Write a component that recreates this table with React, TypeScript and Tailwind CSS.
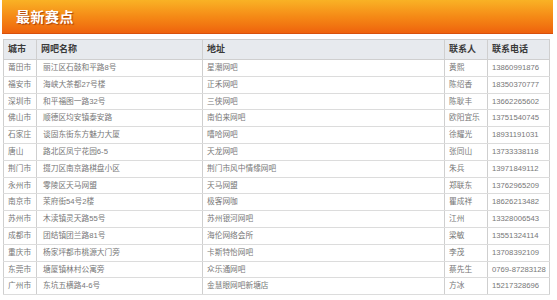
import React from "react";

const rows: [string, string, string, string, string][] = [
  ["莆田市", "丽江区石鼓和平路8号", "星潮网吧", "黄熙", "13860991876"],
  ["福安市", "海峡大茶都27号楼", "正禾网吧", "陈绍香", "18350370777"],
  ["深圳市", "和平福图一路32号", "三侠网吧", "陈耿丰", "13662265602"],
  ["佛山市", "顺德区均安镇泰安路", "南伯来网吧", "欧阳宜乐", "13751540745"],
  ["石家庄", "谈固东街东方魅力大厦", "嘻哈网吧", "徐耀光", "18931191031"],
  ["唐山", "路北区凤宁花园6-5", "天龙网吧", "张同山", "13733338118"],
  ["荆门市", "掇刀区南京路棋盘小区", "荆门市风中情缘网吧", "朱兵", "13971849112"],
  ["永州市", "零陵区天马网盟", "天马网盟", "郑联东", "13762965209"],
  ["南京市", "茉府街54号2楼", "极客网咖", "瞿成祥", "18626213482"],
  ["苏州市", "木渎镇灵天路55号", "苏州银河网吧", "江州", "13328006543"],
  ["成都市", "团结镇团兰路81号", "海伦网络会所", "梁敏", "13551324114"],
  ["重庆市", "杨家坪都市桃源大门旁", "卡斯特怡网吧", "李茂", "13708392109"],
  ["东莞市", "塘厦镇林村公寓旁", "众乐通网吧", "蔡先生", "0769-87283128"],
  ["广州市", "东坑五横路4-6号", "金慧眼网吧新塘店", "方冰", "15217328696"],
];

const headers = ["城市", "网吧名称", "地址", "联系人", "联系电话"];

export default function App() {
  return (
    <div
      className="w-[557px] h-[300px] bg-white overflow-hidden"
      style={{ fontFamily: '"Liberation Sans", "Noto Sans CJK SC", sans-serif' }}
    >
      <div className="ml-[2px] w-[551px] h-[34px] bg-gradient-to-b from-[#f9b225] via-[#f58a16] to-[#ee620d] border-b border-[#d8500c] flex items-center pl-[14px]">
        <span className="text-white font-bold text-[14px] leading-none tracking-[0.5px] [text-shadow:1px_1px_1px_#a8400a]">
          最新赛点
        </span>
      </div>
      <table className="ml-[3px] mt-[5px] w-[546px] table-fixed border-collapse border border-[#cfcfcf]">
        <colgroup>
          <col className="w-[33px]" />
          <col className="w-[166px]" />
          <col className="w-[242px]" />
          <col className="w-[43px]" />
          <col className="w-[62px]" />
        </colgroup>
        <thead>
          <tr className="h-[20px] bg-[#e7eaee]">
            {headers.map((h) => (
              <th
                key={h}
                className="border border-[#cfcfcf] text-left font-bold text-[9px] text-[#3a3a3a] pl-[4px] p-0 leading-none"
              >
                {h}
              </th>
            ))}
          </tr>
        </thead>
        <tbody>
          {rows.map((r, i) => (
            <tr key={i} className="h-[16.8px]">
              {r.map((c, j) => (
                <td
                  key={j}
                  className={
                    "border-y border-[#dcdcdc] border-x-[#cfcfcf] border-x text-left text-[7.7px] text-[#777] leading-none p-0 whitespace-nowrap overflow-hidden " +
                    (j === 1 ? "pl-[6px]" : "pl-[4px]")
                  }
                >
                  {c}
                </td>
              ))}
            </tr>
          ))}
        </tbody>
      </table>
    </div>
  );
}
